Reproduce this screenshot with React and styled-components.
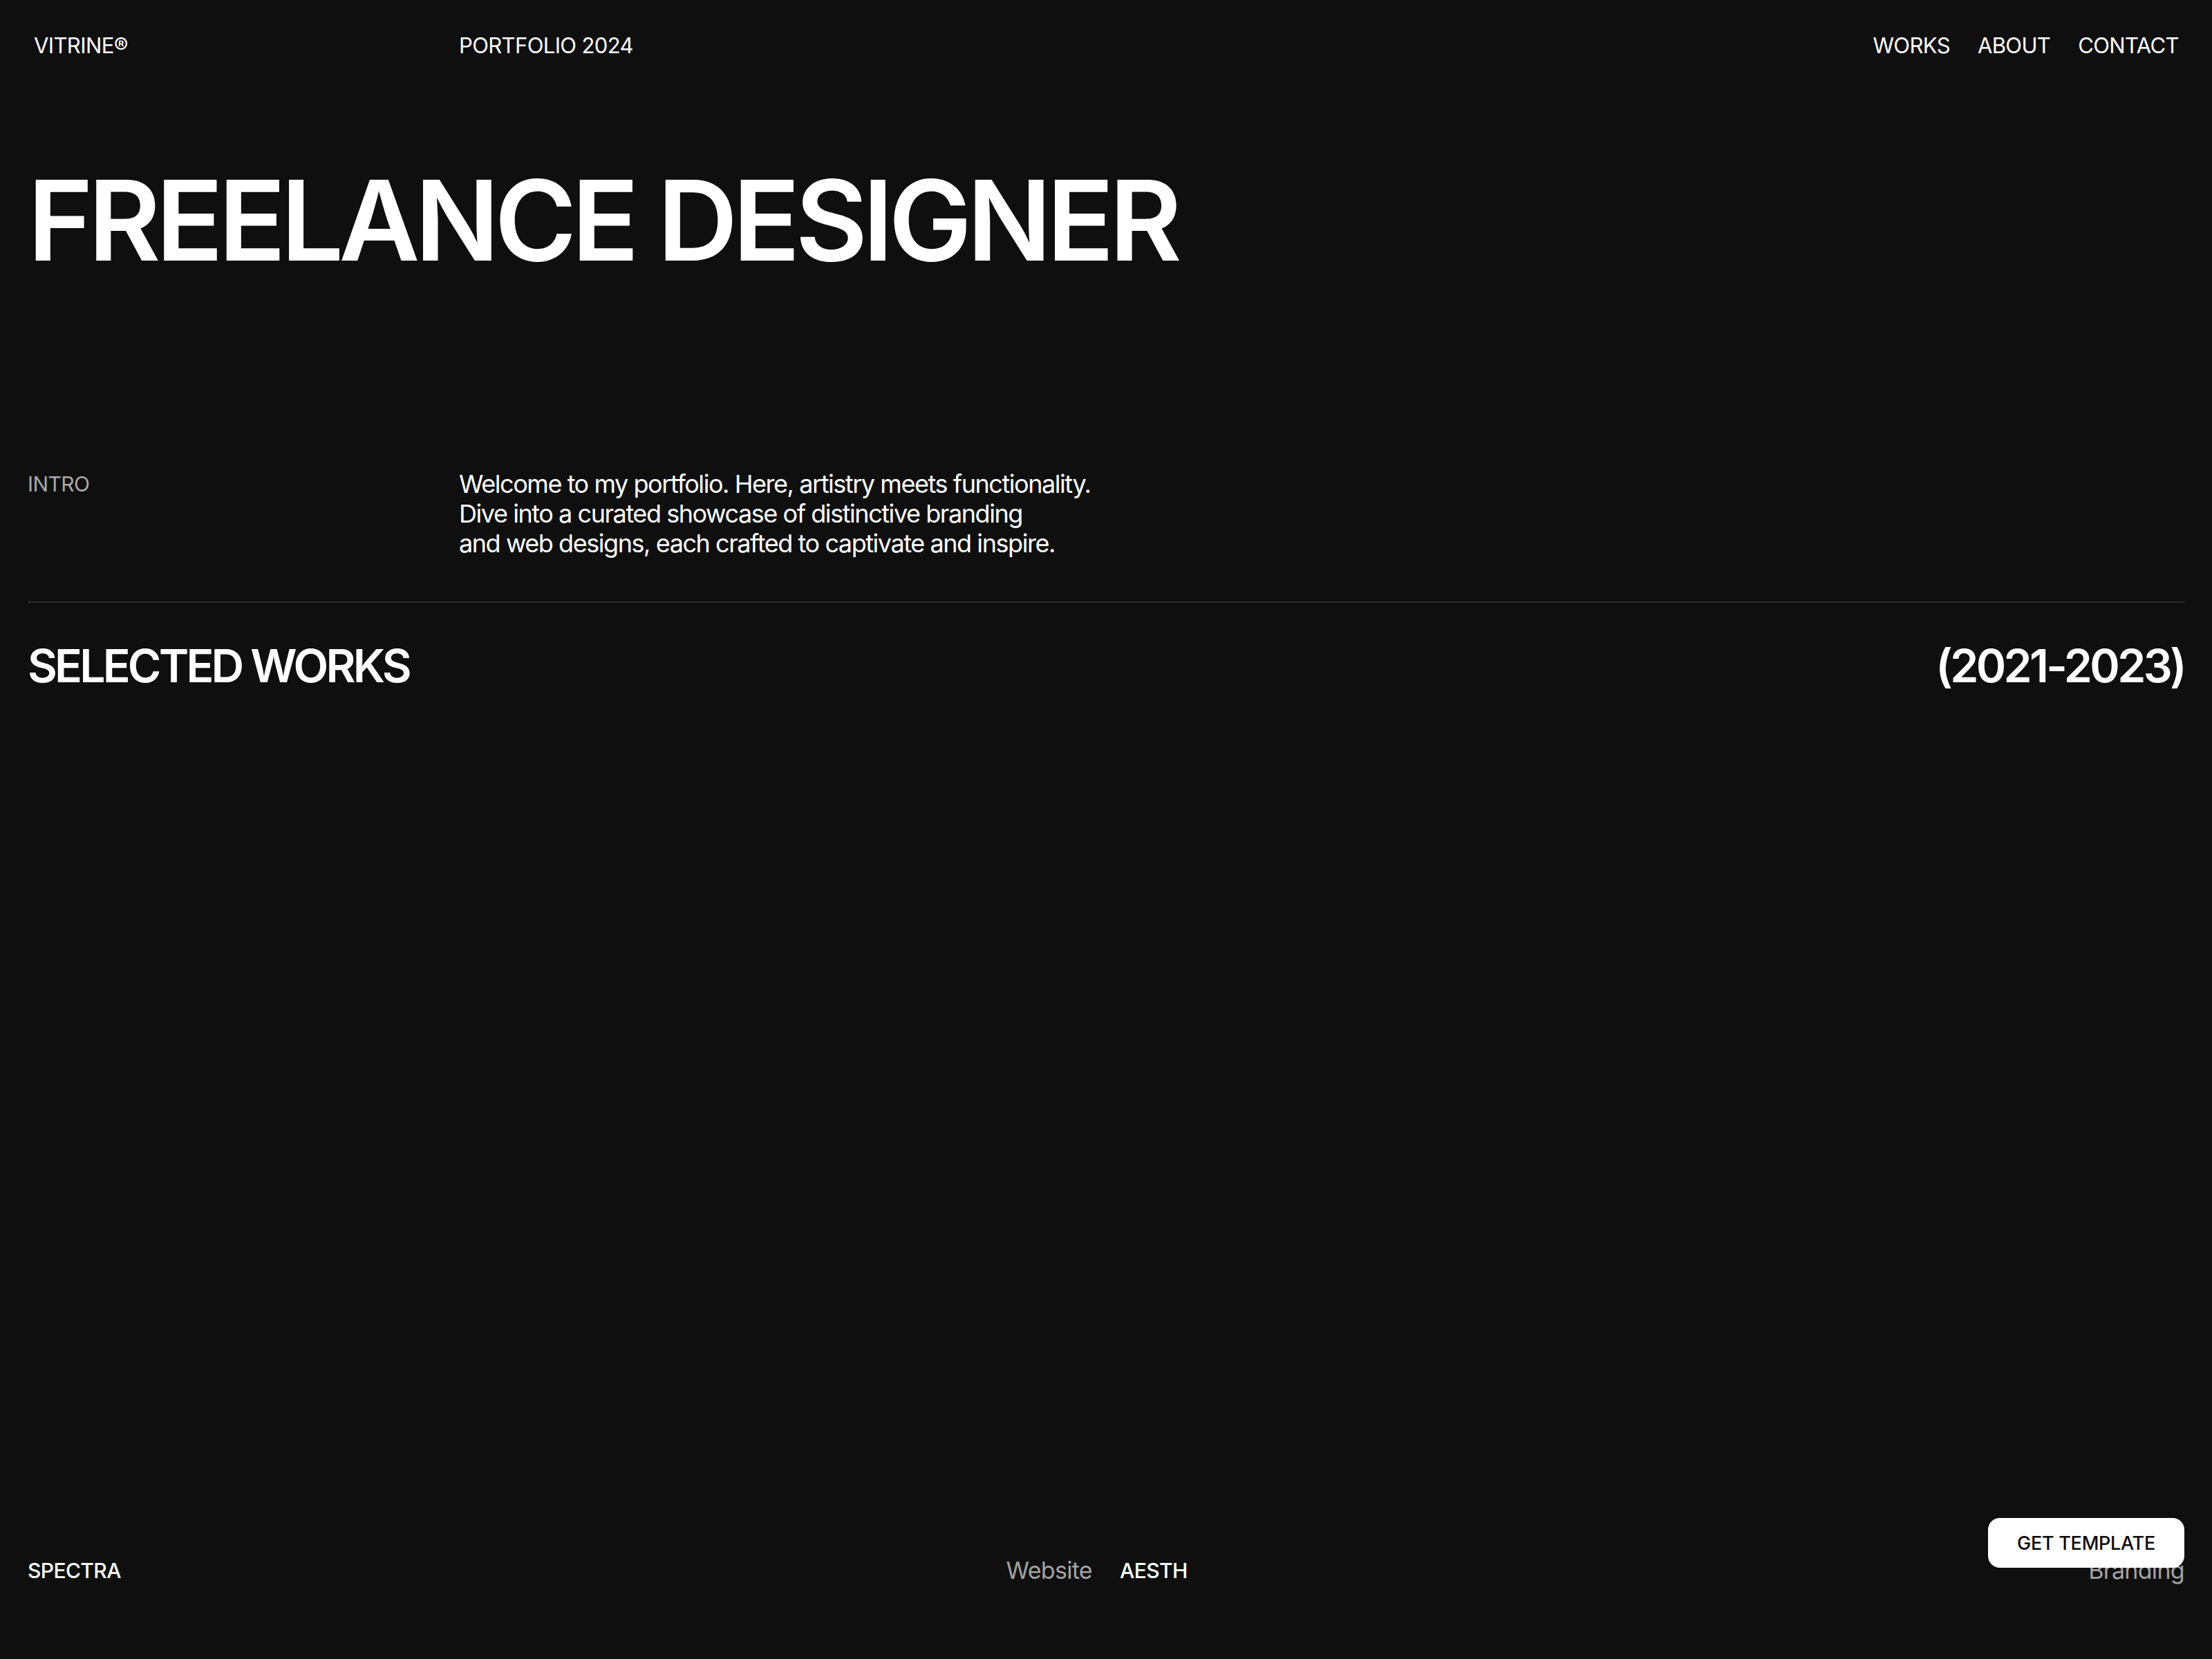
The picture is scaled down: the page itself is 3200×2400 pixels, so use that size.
import React from 'react'
import styled, { createGlobalStyle } from 'styled-components'

const GlobalStyle = createGlobalStyle`
  * {
    box-sizing: border-box;
  }
  body {
    margin: 0;
    background: #0f0f0f;
    color: #fff;
    font-family: Inter, "Noto Sans", sans-serif;
    -webkit-font-smoothing: antialiased;
  }
`

const Page = styled.div`
  min-height: 100vh;
  padding: 0 40px;
`

const Header = styled.header`
  display: grid;
  grid-template-columns: repeat(5, 1fr);
  align-items: center;
  padding-top: 48px;
  font-size: 31px;
  line-height: 36px;
  font-weight: 400;
  letter-spacing: -0.02em;
`

const Logo = styled.a`
  padding-left: 9px;
  color: #fff;
  text-decoration: none;
`

const Edition = styled.span`
  grid-column: 2;
`

const Nav = styled.nav`
  grid-column: 4 / span 2;
  display: flex;
  justify-content: flex-end;
  gap: 40px;
  padding-right: 8px;
`

const NavLink = styled.a`
  color: #fff;
  text-decoration: none;
`

const Title = styled.h1`
  margin: 155px 0 0;
  font-size: 161px;
  line-height: 160px;
  font-weight: 600;
  letter-spacing: -0.044em;
`

const Intro = styled.section`
  display: grid;
  grid-template-columns: repeat(5, 1fr);
  margin-top: 280px;
  padding-bottom: 62px;
  border-bottom: 2px solid #2b2b2b;
`

const Label = styled.span`
  padding-top: 3px;
  font-size: 30px;
  line-height: 36px;
  color: #a9a9a9;
  letter-spacing: -0.02em;
`

const Lead = styled.p`
  grid-column: 2 / span 3;
  margin: 0;
  font-size: 36px;
  line-height: 43px;
  font-weight: 400;
  letter-spacing: -0.04em;
`

const WorksHead = styled.div`
  display: flex;
  justify-content: space-between;
  align-items: baseline;
  margin-top: 55px;
`

const WorksTitle = styled.h2`
  margin: 0;
  font-size: 66px;
  line-height: 72px;
  font-weight: 600;
  letter-spacing: -0.058em;
`

const Years = styled.span`
  font-size: 66px;
  line-height: 72px;
  font-weight: 600;
  letter-spacing: -0.055em;
`

const WorksGrid = styled.div`
  display: grid;
  grid-template-columns: repeat(2, 1fr);
  gap: 40px;
  margin-top: 42px;
`

const Card = styled.article`
  display: flex;
  flex-direction: column;
  gap: 16px;
`

const Cover = styled.div`
  height: 1196px;
  background: #0f0f0f;
`

const Caption = styled.div`
  display: flex;
  justify-content: space-between;
  align-items: baseline;
`

const CardName = styled.span`
  font-size: 30px;
  line-height: 36px;
  font-weight: 500;
  letter-spacing: -0.02em;
`

const CardType = styled.span`
  font-size: 34px;
  line-height: 36px;
  color: #a3a3a3;
  letter-spacing: -0.02em;
  transform: translateY(1px);
`

const TemplateButton = styled.a`
  position: fixed;
  right: 40px;
  bottom: 132px;
  display: flex;
  align-items: center;
  justify-content: center;
  width: 284px;
  height: 72px;
  border-radius: 17px;
  background: #fff;
  color: #0a0a0a;
  font-size: 27px;
  font-weight: 500;
  letter-spacing: -0.01em;
  text-decoration: none;
`

const works = [
  { name: 'SPECTRA', type: 'Website' },
  { name: 'AESTH', type: 'Branding' },
]

export default function App() {
  return (
    <>
      <GlobalStyle />
      <Page>
        <Header>
          <Logo href="#">VITRINE®</Logo>
          <Edition>PORTFOLIO 2024</Edition>
          <Nav>
            <NavLink href="#">WORKS</NavLink>
            <NavLink href="#">ABOUT</NavLink>
            <NavLink href="#">CONTACT</NavLink>
          </Nav>
        </Header>

        <Title>FREELANCE DESIGNER</Title>

        <Intro>
          <Label>INTRO</Label>
          <Lead>
            Welcome to my portfolio. Here, artistry meets functionality.
            <br />
            Dive into a curated showcase of distinctive branding
            <br />
            and web designs, each crafted to captivate and inspire.
          </Lead>
        </Intro>

        <WorksHead>
          <WorksTitle>SELECTED WORKS</WorksTitle>
          <Years>(2021-2023)</Years>
        </WorksHead>

        <WorksGrid>
          {works.map((work) => (
            <Card key={work.name}>
              <Cover />
              <Caption>
                <CardName>{work.name}</CardName>
                <CardType>{work.type}</CardType>
              </Caption>
            </Card>
          ))}
        </WorksGrid>
      </Page>
      <TemplateButton href="#">GET TEMPLATE</TemplateButton>
    </>
  )
}
